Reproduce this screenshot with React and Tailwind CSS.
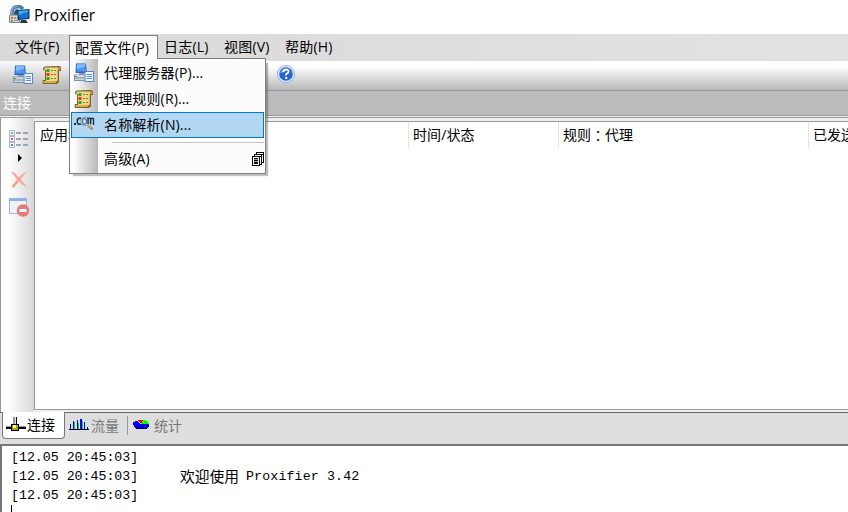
import React from "react";

const LogoIcon = () => (
  <svg width="21" height="20" viewBox="0 0 21 20" className="block shrink-0">
    <path d="M3 11V8Q3 2 9 1.5Q12 1.5 14 4" fill="none" stroke="#4f7dab" strokeWidth="3.6" />
    <path d="M2.4 9V7Q3 1.6 9 1" fill="none" stroke="#93b5d6" strokeWidth="1.2" />
    <path d="M5 10V8Q6 4 9 4V10Z" fill="#274a70" />
    <rect x="0" y="9.5" width="11" height="8.5" rx="1" fill="#7d868c" />
    <rect x="1" y="10.5" width="9" height="6.5" fill="#cdd2d4" />
    <rect x="2" y="12" width="2" height="2" fill="#e0632f" />
    <rect x="2" y="15" width="2" height="1.6" fill="#3ba43d" />
    <rect x="5" y="12" width="2" height="2" fill="#e0913f" />
    <path d="M5 15.6h4M8.6 12v3" stroke="#8f979c" />
    <path d="M8 5L20.5 4V14L9 15Z" fill="#16395c" />
    <path d="M9.5 6L19.2 5.2V13L10 13.6Z" fill="#1474d4" />
    <path d="M9.6 10Q15 7 19.2 7V5.2L9.5 6Z" fill="#4ba8f2" />
    <path d="M12 15h5l2 3H11Z" fill="#27394a" />
  </svg>
);

const ServersIcon = () => (
  <svg width="21" height="20" viewBox="0 0 21 20" className="block shrink-0">
    <path d="M2 0.5H12L13 10H1.5Z" fill="#2f66c4" />
    <path d="M3 1.2H11.2L12 8.5H2.6Z" fill="#4f97f0" />
    <path d="M3 1.2H11.2V3.5L2.8 6Z" fill="#84bdfb" />
    <path d="M5 10h5v2h-5Z" fill="#8c98a8" />
    <rect x="0" y="11.5" width="13" height="6.5" fill="#8092a9" />
    <rect x="1" y="12" width="11" height="5" fill="#cfd6de" />
    <path d="M1 15h9" stroke="#8190a1" />
    <rect x="1" y="13" width="2" height="1" fill="#3a9e51" />
    <rect x="10.5" y="8" width="9.5" height="11" fill="#5b82c4" />
    <rect x="11.5" y="9" width="7.5" height="9" fill="#eef5ff" />
    <path d="M12.5 11.5h5.5M12.5 13.5h5.5M12.5 15.5h5.5" stroke="#5b92da" />
  </svg>
);

const RulesIcon = () => (
  <svg width="20" height="20" viewBox="0 0 20 20" className="block shrink-0">
    <path d="M3 1.5Q1 1.5 1 4Q1 5.5 3 5.5V15H1Q0 17 1 19H14Q17 19 17 15.5V6H19V3Q19 1 17 1Z" fill="#7f6328" />
    <path d="M3 2.5H16.5Q15.5 4 15.7 6V15Q15.5 17 14 16H4V5H2.5Q2 3 3 2.5Z" fill="#f0d98a" />
    <path d="M16.6 2Q18.2 2 18.2 5H16.4Z" fill="#d6ad43" />
    <path d="M1.5 16H13.5Q13.5 18 15 18H1.5Z" fill="#d6ad4c" />
    <rect x="4.5" y="4" width="3" height="3" fill="#1fae26" />
    <rect x="4.5" y="8" width="3" height="3" fill="#f02b24" />
    <rect x="4.5" y="12" width="3" height="3" fill="#1fae26" />
    <path d="M9 5.5h5M9 9.5h5M9 13.5h5" stroke="#8a7338" strokeDasharray="2 1" />
  </svg>
);

const NameIcon = () => (
  <svg width="21" height="18" viewBox="0 0 21 18" className="block shrink-0">
    <rect x="0" y="7" width="2" height="2" fill="#222d3a" />
    <path d="M7 2.4H4.5L3.4 3.5V7L4.5 8.2H7" fill="none" stroke="#222d3a" strokeWidth="1.6" />
    <circle cx="11" cy="5.4" r="4.2" fill="#d4e8fc" stroke="#8ba2bb" strokeWidth="1.2" />
    <ellipse cx="10.5" cy="5.4" rx="2" ry="2.7" fill="none" stroke="#5978a0" strokeWidth="1.3" />
    <path d="M14 8V2.5Q16 1.5 16.7 3V8M16.7 3Q19 1.5 19.5 3V9" fill="none" stroke="#222d3a" strokeWidth="1.4" />
    <path d="M14 9L18.4 13.4" stroke="#a77a35" strokeWidth="2.4" />
    <path d="M14 9L17.6 12.4" stroke="#edc57e" />
  </svg>
);

const HelpIcon = () => (
  <svg width="20" height="20" viewBox="0 0 20 20" className="block shrink-0">
    <circle cx="10" cy="10" r="9" fill="#8fb2e6" />
    <circle cx="10" cy="10" r="8" fill="#dfecfc" />
    <circle cx="10" cy="10" r="6.8" fill="#2863d4" />
    <path d="M4 9Q6 3 13 4.4Q10 8 4 9" fill="#6aa0ef" />
    <path d="M7.2 8Q7.5 5.6 10 5.6Q12.8 5.6 12.6 7.8Q12.3 9.2 10.2 10V11.6" fill="none" stroke="#fff" strokeWidth="1.8" />
    <rect x="9.2" y="13" width="2" height="2" fill="#fff" />
  </svg>
);

const ListIcon = () => (
  <svg width="20" height="18" viewBox="0 0 20 18" className="block">
    {["#7cb57a", "#dc5353", "#6289d0"].map((c, i) => (
      <g key={c} transform={`translate(0 ${i * 6})`}>
        <rect x=".5" y=".5" width="5" height="5" fill="#f5f7fa" stroke="#a9b7c9" />
        <rect x="2" y="2" width="2" height="2" fill={c} />
        <path d="M7 3h5M14 3h5" stroke="#8390a6" strokeWidth="1.6" />
      </g>
    ))}
  </svg>
);

const CloseIcon = () => (
  <svg width="18" height="17" viewBox="0 0 18 17" className="block">
    <path d="M1 0.5Q4 0.5 9 6.5Q13 2 17 0.5Q13 5 10.5 8.5Q14 12 17 16.5Q12 14 9 10.5Q6 14 3.5 17L1.5 15.5Q4 12 7 8.5Q4 4 1 0.5Z" fill="#f8a58f" />
  </svg>
);

const BlockIcon = () => (
  <svg width="21" height="19" viewBox="0 0 21 19" className="block">
    <rect x=".5" y=".5" width="17" height="15" fill="#edf1f8" stroke="#a4b2ca" />
    <rect x="0" y="0" width="18" height="3" fill="#8fb0ea" />
    <circle cx="14" cy="12.5" r="6.2" fill="#e77779" />
    <rect x="10.5" y="11" width="7" height="3" fill="#fff" />
  </svg>
);

const StackIcon = () => (
  <svg width="12" height="14" viewBox="0 0 12 14" className="block" shapeRendering="crispEdges">
    <path d="M4 0H12V11H10V13H8V14H0V4H2V2H4Z" fill="#000" />
    <path d="M5 1h6v1H5ZM3 3h6v1H3ZM1 5h6v1H1ZM1 6h1v7H1ZM2 12h5v1H2ZM6 6h1v6H6ZM8 5h1v7H8ZM10 3h1v7h-1Z" fill="#fff" />
    <path d="M2 7h4v1H2ZM2 9h4v1H2Z" fill="#999" />
  </svg>
);

const NetIcon = () => (
  <svg width="20" height="15" viewBox="0 0 20 15" className="block shrink-0" shapeRendering="crispEdges">
    <path d="M7 0h2v8H7Z" fill="#999" />
    <path d="M9 0h1v8H9Z" fill="#ddd" />
    <path d="M10 0h1v8h-1Z" fill="#000" />
    <path d="M0 9h20v1H0Z" fill="#999" />
    <path d="M0 10h20v2H0Z" fill="#000" />
    <path d="M5 7h8v7H5Z" fill="#000" />
    <path d="M6 8h6v5H6Z" fill="#a8a010" />
    <path d="M7 8h3v3H7Z" fill="#fff9a0" />
  </svg>
);

const TrafficIcon = () => (
  <svg width="20" height="12" viewBox="0 0 20 12" className="block shrink-0" shapeRendering="crispEdges">
    <path d="M1 5h1v5H1ZM4 2h1v8H4ZM8 1h1v9H8ZM11 0h2v10h-2ZM15 3h1v7h-1ZM18 8h1v2h-1Z" fill="#0000ff" />
    <path d="M5 3h1v7H5ZM9 4h1v6H9ZM13 2h1v8h-1Z" fill="#00dc32" />
    <path d="M0 10h20v1H0Z" fill="#000" />
  </svg>
);

const PieIcon = () => (
  <svg width="17" height="11" viewBox="0 0 17 11" className="block shrink-0" shapeRendering="crispEdges">
    <path d="M1 4H16V7L13 9H4L1 7Z" fill="#000080" />
    <path d="M0 2L4 1L8 4L16 4V5L13 7H3L0 5Z" fill="#0000ff" />
    <path d="M4 0H10L8 4Z" fill="#ff0000" />
    <path d="M10 0L15 1L16 4H8Z" fill="#00ff00" />
  </svg>
);

const MENUS = "flex h-[23px] items-center whitespace-nowrap pb-px tracking-[0.2px]";

const MenuRow = ({ icon, children, selected }) => (
  <div className={selected ? "flex h-[26px] items-center border border-[#0078d7] bg-[#b1d7f2]" : "flex h-[26px] items-center border border-transparent"}>
    <span className="flex w-[32px] shrink-0 pl-[2px]">{icon}</span>
    <span className="whitespace-nowrap tracking-[0.15px]">{children}</span>
  </div>
);

const LogLine = ({ children }) => (
  <div className="flex h-[19px] items-center whitespace-pre">
    <span className="w-[169px] shrink-0">[12.05 20:45:03]</span>
    {children}
  </div>
);

export default function App() {
  return (
    <div className="relative flex h-[512px] w-[848px] flex-col overflow-hidden bg-white font-['Open_Sans','Noto_Sans_CJK_SC',sans-serif] text-[14px] leading-[20px] text-black">
      <header className="flex h-[34px] shrink-0 items-center gap-[4px] pl-[9px] pb-[4px]">
        <LogoIcon />
        <span className="text-[15.5px]">Proxifier</span>
      </header>

      <nav className="flex h-[27px] shrink-0 items-center bg-linear-to-r from-[#d9d9d9] to-[#e2e2e2] pl-[15px]">
        <span className={`${MENUS} w-[54px]`}>文件(F)</span>
        <span className="flex h-[26px] w-[89px] items-center self-end whitespace-nowrap border border-b-0 border-[#808080] bg-[#fcfcfc] pl-[5px] pb-[2px] tracking-[0.2px]">配置文件(P)</span>
        <span className={`${MENUS} w-[60px] pl-[6px]`}>日志(L)</span>
        <span className={`${MENUS} w-[61px] pl-[6px]`}>视图(V)</span>
        <span className={`${MENUS} pl-[6px]`}>帮助(H)</span>
      </nav>

      <div className="flex h-[29px] shrink-0 items-center bg-linear-to-b from-[#f4f4f4] to-[#b8b8b8]">
        <div className="flex h-full w-[268px] items-center gap-[8px] rounded-r bg-linear-to-b from-[#fbfbfb] to-[#b6b6b6] pl-[13px] pb-[2px]">
          <ServersIcon />
          <RulesIcon />
        </div>
        <div className="flex h-full flex-1 items-center bg-linear-to-b from-white from-20% to-[#b8b8b8] pl-[8px] pb-[3px]">
          <HelpIcon />
        </div>
      </div>

      <div className="flex h-[26px] shrink-0 items-center border-y border-[#999] bg-[#bbb] pl-[3px] text-white">连接</div>
      <div className="h-px shrink-0 bg-[#f4f4f4]" />

      <main className="flex h-[295px] shrink-0 border-l border-t border-[#999] bg-[#efefef]">
        <aside className="flex w-[33px] flex-col bg-linear-to-r from-white from-20% to-[#d8d8d8] pl-[8px] pt-[12px]">
          <ListIcon />
          <span className="ml-[9px] mt-[6px] h-0 w-0 border-y-[4px] border-l-[4px] border-y-transparent border-l-black" />
          <span className="ml-px mt-[9px]"><CloseIcon /></span>
          <span className="mt-[10px]"><BlockIcon /></span>
        </aside>
        <section className="mb-[2px] mt-[3px] flex-1 border-y border-l border-[#999] bg-white">
          <div className="flex h-[26px] items-center whitespace-nowrap">
            <span className="flex h-full w-[374px] items-center border-r border-[#e3e3e3] pl-[5px]">应用程序</span>
            <span className="flex h-full w-[150px] items-center border-r border-[#e3e3e3] pl-[4px] tracking-[0.1px]">时间/状态</span>
            <span className="flex h-full w-[250px] items-center border-r border-[#e3e3e3] pl-[4px]">规则<span className="font-['Noto_Sans_CJK_TC',sans-serif]" lang="zh-TW">：</span>代理</span>
            <span className="w-[39px] shrink-0 pl-[4px]">已发送</span>
          </div>
        </section>
      </main>

      <div className="flex h-[32px] shrink-0 items-start border-t border-[#696969] bg-[#dedede] text-[#777]">
        <div className="-mt-px ml-[2px] flex h-[27px] w-[63px] items-center gap-px rounded-b border border-t-0 border-[#777] bg-white pl-[3px] pb-[2px] text-black">
          <NetIcon />
          <span className="pt-[2px]">连接</span>
        </div>
        <div className="flex h-[26px] w-[62px] items-center gap-[2px] pl-[4px] pb-[2px]">
          <TrafficIcon />
          <span className="pt-px">流量</span>
        </div>
        <div className="mt-[3px] h-[19px] w-px bg-[#999]" />
        <div className="flex h-[26px] items-center gap-[4px] pl-[5px] pb-[2px]">
          <PieIcon />
          <span className="pt-px">统计</span>
        </div>
      </div>

      <section className="flex-1 overflow-hidden border-l-2 border-t-2 border-[#757575] bg-white pl-[9px] pt-[2px] font-['Liberation_Mono','Noto_Sans_CJK_SC',monospace] text-[13.25px]">
        <LogLine />
        <LogLine>
          <span className="font-['Noto_Sans_CJK_SC',sans-serif] text-[14.75px] pb-[2px]">欢迎使用</span>
          <span className="pl-[7px] tracking-[0.15px]">Proxifier 3.42</span>
        </LogLine>
        <LogLine />
        <div className="h-[12px] w-px bg-black" />
      </section>

      <div className="absolute left-[69px] top-[59px] h-[115px] w-[197px] border border-t-0 border-[#808080] bg-[#fcfcfc] shadow-[3px_3px_1px_-1px_rgba(0,0,0,0.25)]">
        <div className="flex h-full flex-col bg-[linear-gradient(to_right,#fcfcfc_0,#fcfcfc_4px,#b9b9b9_28px,#fcfcfc_28px)] pl-px pr-px pt-px">
          <MenuRow icon={<ServersIcon />}>代理服务器(P)...</MenuRow>
          <MenuRow icon={<RulesIcon />}>代理规则(R)...</MenuRow>
          <MenuRow icon={<NameIcon />} selected>名称解析(N)...</MenuRow>
          <div className="ml-[41px] mt-[4px] h-px shrink-0 bg-[#c5c5c5]" />
          <div className="flex flex-1 items-center justify-between pl-[33px] pt-[2px]">
            <span className="tracking-[0.15px]">高级(A)</span>
            <StackIcon />
          </div>
        </div>
      </div>
      <div className="absolute left-[157px] top-[58px] h-px w-[109px] bg-[#808080]" />
    </div>
  );
}
